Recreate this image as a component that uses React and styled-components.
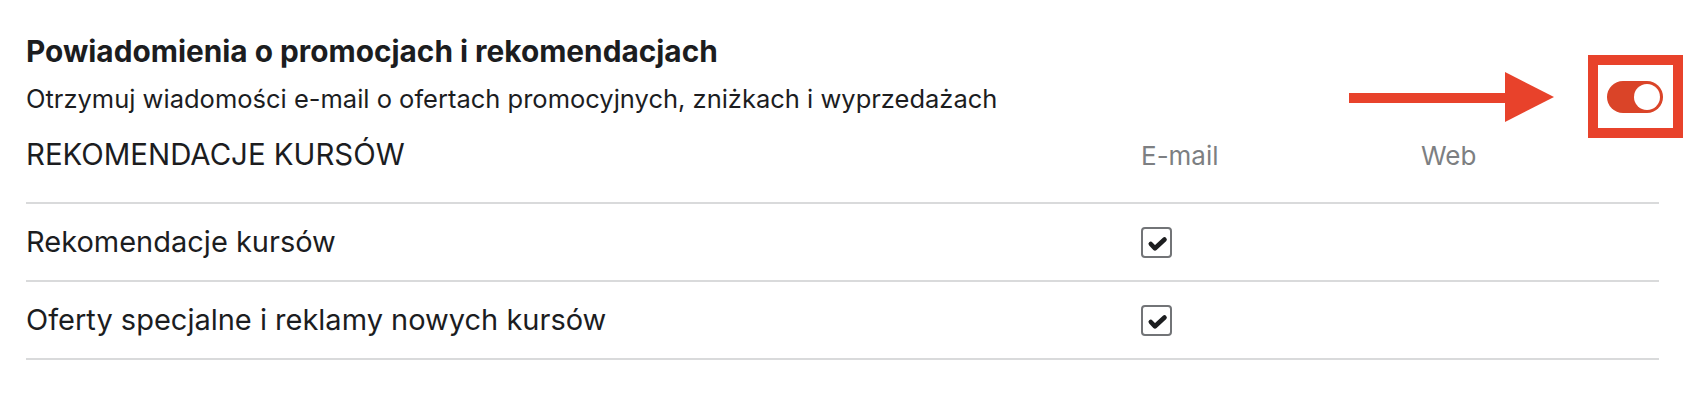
import React from 'react';
import styled, { createGlobalStyle } from 'styled-components';

const GlobalStyle = createGlobalStyle`
  body {
    margin: 0;
    background: #fff;
    font-family: Inter, "Liberation Sans", sans-serif;
    color: #1c1d1f;
  }
`;

const Page = styled.div`
  width: 1633px;
  padding: 34px 0 0 26px;
`;

const Header = styled.div`
  display: flex;
  justify-content: space-between;
  align-items: flex-end;
`;

const Title = styled.h2`
  margin: 0;
  font-size: 29.8px;
  line-height: 34px;
  font-weight: 700;
`;

const Description = styled.p`
  margin: 15px 0 0;
  font-size: 25.5px;
  line-height: 32px;
  font-weight: 400;
`;

const ToggleWrap = styled.div`
  position: relative;
  margin: 0 -4px 2px 0;
`;

const Toggle = styled.div`
  display: flex;
  align-items: center;
  justify-content: ${props => (props.on ? 'flex-end' : 'flex-start')};
  width: 56px;
  height: 32px;
  padding: 3px;
  box-sizing: border-box;
  border-radius: 16px;
  background: ${props => (props.on ? '#da4428' : '#c6c9cc')};
`;

const Knob = styled.span`
  width: 26px;
  height: 26px;
  border-radius: 50%;
  background: #fff;
`;

const Highlight = styled.div`
  position: absolute;
  left: -19px;
  top: -26px;
  width: 95px;
  height: 83px;
  box-sizing: border-box;
  border: 10px solid #e8422b;
  pointer-events: none;
`;

const Arrow = styled.svg`
  position: absolute;
  left: -258px;
  top: -9px;
  width: 205px;
  height: 50px;
`;

const Grid = styled.div`
  display: grid;
  grid-template-columns: 1fr 280px 238px;
  align-items: ${props => props.align || 'center'};
`;

const ColumnsHeader = styled(Grid)`
  padding: 22px 0 29px;
`;

const SectionHeading = styled.h3`
  margin: 0;
  font-size: 29.4px;
  line-height: 36px;
  font-weight: 400;
  text-transform: uppercase;
`;

const ColumnLabel = styled.span`
  font-size: 26px;
  line-height: 32px;
  color: #7d7f82;
`;

const Row = styled(Grid)`
  height: 76px;
  border-top: 2px solid #d9dadb;
  &:last-child {
    border-bottom: 2px solid #d9dadb;
  }
`;

const RowLabel = styled.span`
  font-size: 29px;
  line-height: 34px;
`;

const Checkbox = styled.span`
  display: flex;
  align-items: center;
  justify-content: center;
  width: 31px;
  height: 31px;
  box-sizing: border-box;
  border: 2px solid #727477;
  border-radius: 4px;
`;

const Check = () => (
  <svg width="27" height="27" viewBox="0 0 27 27">
    <path
      d="M7.8 15 L12 19.3 L21.5 10.5"
      fill="none"
      stroke="#1c1d1f"
      strokeWidth="4.6"
      strokeLinecap="round"
      strokeLinejoin="round"
    />
  </svg>
);

const rows = [
  { label: 'Rekomendacje kursów', email: true },
  { label: 'Oferty specjalne i reklamy nowych kursów', email: true },
];

const App = () => (
  <>
    <GlobalStyle />
    <Page>
      <Header>
        <div>
          <Title>Powiadomienia o promocjach i rekomendacjach</Title>
          <Description>
            Otrzymuj wiadomości e-mail o ofertach promocyjnych, zniżkach i wyprzedażach
          </Description>
        </div>
        <ToggleWrap>
          <Toggle on>
            <Knob />
          </Toggle>
          <Highlight />
          <Arrow viewBox="0 0 205 50">
            <rect x="0" y="21" width="160" height="10" fill="#e8422b" />
            <polygon points="156,0 205,25 156,50" fill="#e8422b" />
          </Arrow>
        </ToggleWrap>
      </Header>

      <ColumnsHeader align="baseline">
        <SectionHeading>Rekomendacje kursów</SectionHeading>
        <ColumnLabel>E-mail</ColumnLabel>
        <ColumnLabel>Web</ColumnLabel>
      </ColumnsHeader>

      <div>
        {rows.map(row => (
          <Row key={row.label}>
            <RowLabel>{row.label}</RowLabel>
            <span>
              {row.email && (
                <Checkbox>
                  <Check />
                </Checkbox>
              )}
            </span>
            <span />
          </Row>
        ))}
      </div>
    </Page>
  </>
);

export default App;
